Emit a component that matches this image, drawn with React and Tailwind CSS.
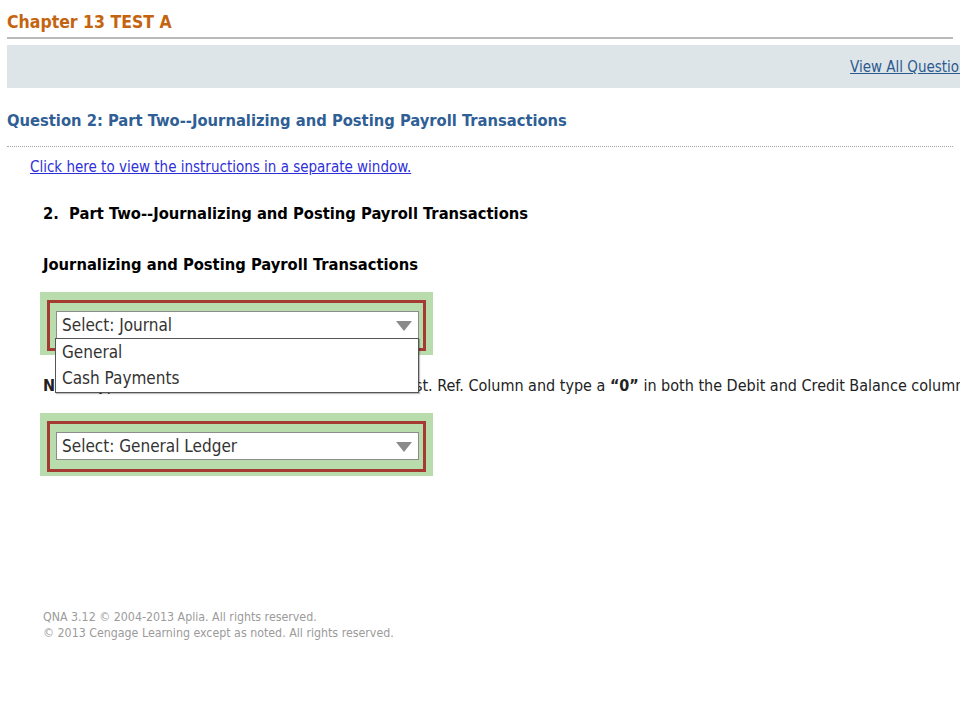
import React from 'react';

const font = { fontFamily: '"DejaVu Sans Condensed", "DejaVu Sans", Verdana, sans-serif' };

function Arrow() {
  return (
    <svg width="16" height="10" viewBox="0 0 16 10" className="shrink-0">
      <polygon points="0,0 16,0 8,10" fill="#8a8a8a" />
    </svg>
  );
}

function SelectBox({ label, options }) {
  return (
    <div className="ml-[40px] w-[393px] bg-[#b9dcac] px-[7px] pt-[8px] pb-[4px]">
      <div className="border-[3px] border-[#a43a32] bg-[#b9dcac] pl-[6px] pr-[4px] pt-[8px] pb-[9px]">
        <div className="relative">
          <div className="flex h-[28px] items-center justify-between border border-[#8c8c8c] bg-white pl-[5px] pr-[6px] pt-[2px] text-[17px] text-[#333]">
            <span>{label}</span>
            <Arrow />
          </div>
          {options && (
            <div className="absolute left-[-1px] top-[27px] z-10 w-[364px] border border-[#555] bg-white pt-[1px] text-[17px] text-[#333] shadow-[1px_1px_1px_rgba(0,0,0,0.25)]">
              {options.map((o) => (
                <div key={o} className="flex h-[26px] items-center pl-[6px]">{o}</div>
              ))}
            </div>
          )}
        </div>
      </div>
    </div>
  );
}

export default function App() {
  return (
    <div className="h-[720px] w-[960px] overflow-hidden bg-white whitespace-nowrap" style={font}>
      <div className="px-[7px] pt-[10px]">
        <h1 className="h-[27px] text-[17.5px] font-bold leading-[24px] text-[#c4640e]">Chapter 13 TEST A</h1>
        <div className="h-[2px] bg-[#b9b9b9]" />
      </div>
      <div className="ml-[7px] mt-[6px] flex h-[43px] items-center bg-[#dde5e9] pl-[843px]">
        <a href="#" className="pt-[2px] text-[15px] text-[#2c5a8e] underline">View All Questions</a>
      </div>
      <div className="px-[7px]">
        <h2 className="mt-[22px] text-[16.4px] font-bold leading-[22px] text-[#2f5f95]">
          Question 2: Part Two--Journalizing and Posting Payroll Transactions
        </h2>
        <div className="mt-[14px] border-t border-dotted border-[#a8a8a8]" />
      </div>
      <div className="ml-[30px] mt-[8px]">
        <a href="#" className="text-[15px] leading-[18px] text-[#2f2fd9] underline">
          Click here to view the instructions in a separate window.
        </a>
      </div>
      <div className="ml-[43px] mt-[25px] text-[16.4px] font-bold leading-[20px] text-black">
        2.&nbsp; Part Two--Journalizing and Posting Payroll Transactions
      </div>
      <div className="ml-[43px] mt-[31px] text-[16.4px] font-bold leading-[20px] text-black">
        Journalizing and Posting Payroll Transactions
      </div>
      <div className="mt-[17px]">
        <SelectBox label="Select: Journal" options={['General', 'Cash Payments']} />
      </div>
      <p className="ml-[43px] mt-[21px] text-[16px] leading-[20px] text-[#222]">
        <b>Note:</b> Type "Balance" in Item column, tick in the Post. Ref. Column and type a <b>“0”</b> in both the Debit and Credit Balance columns.
      </p>
      <div className="mt-[17px]">
        <SelectBox label="Select: General Ledger" />
      </div>
      <div className="ml-[43px] mt-[133px] text-[12.3px] leading-[16px] text-[#9b9b9b]">
        <div>QNA 3.12 © 2004-2013 Aplia. All rights reserved.</div>
        <div>© 2013 Cengage Learning except as noted. All rights reserved.</div>
      </div>
    </div>
  );
}
